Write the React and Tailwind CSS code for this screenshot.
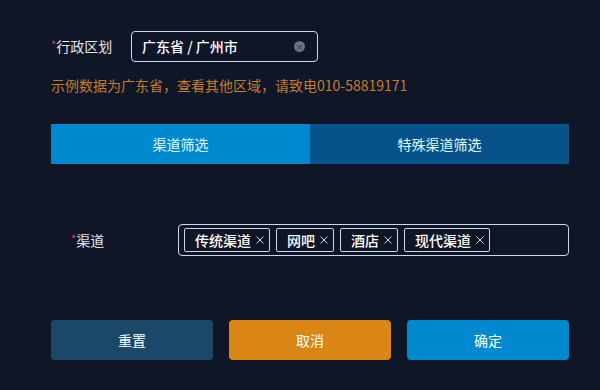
import React, { useState } from 'react'

const FONT = { fontFamily: '"Microsoft YaHei", "Noto Sans CJK SC", "Noto Sans", sans-serif' }

export default function App() {
  const [tab, setTab] = useState('channel')
  const [tags, setTags] = useState(['传统渠道', '网吧', '酒店', '现代渠道'])

  return (
    <div style={FONT} className="w-[600px] h-[390px] bg-[#0e1628] text-white pt-[31px] pl-[51px] pr-[31px] overflow-hidden">
      {/* 行政区划 */}
      <div className="flex items-center h-[31px]">
        <label className="w-[80px] text-[14px] text-[#e6e9ef]">
          <span className="text-[#d9467a] text-[11px] align-top">*</span>行政区划
        </label>
        <div className="w-[187px] h-[31px] border border-[#cfd6e4] rounded-[4px] flex items-center pl-[10px] pr-[12px]">
          <span className="flex-1 text-[14px] font-medium text-white">广东省 / 广州市</span>
          <span className="w-[11px] h-[11px] rounded-full bg-[#6b7180] flex items-center justify-center text-[8px] leading-none text-[#2b3040]">×</span>
        </div>
      </div>

      <div className="mt-[13px] text-[14px] text-[#c77c2c]">示例数据为广东省，查看其他区域，请致电010-58819171</div>

      {/* tabs */}
      <div className="mt-[28px] flex h-[40px]">
        <button
          onClick={() => setTab('channel')}
          className={`flex-1 text-[14px] text-[#e4fbff] ${tab === 'channel' ? 'bg-[#0189cf]' : 'bg-[#08528c]'}`}
        >
          渠道筛选
        </button>
        <button
          onClick={() => setTab('special')}
          className={`flex-1 text-[14px] text-[#e4fbff] ${tab === 'special' ? 'bg-[#0189cf]' : 'bg-[#08528c]'}`}
        >
          特殊渠道筛选
        </button>
      </div>

      {/* 渠道 */}
      <div className="mt-[60px] flex items-center h-[32px]">
        <label className="w-[127px] pl-[20px] text-[14px] text-[#e6e9ef]">
          <span className="text-[#d9467a] text-[11px] align-top">*</span>渠道
        </label>
        <div className="flex-1 h-[32px] border border-[#cfd6e4] rounded-[4px] flex items-center gap-[6px] px-[5px]">
          {tags.map(t => (
            <span key={t} className="h-[24px] border border-[#cfd6e4] rounded-[2px] flex items-center pl-[10px] pr-[5px] text-[14px] font-medium text-white">
              {t}
              <button onClick={() => setTags(tags.filter(x => x !== t))} className="ml-[5px] flex items-center">
                <svg width="8" height="8" viewBox="0 0 8 8" fill="none" stroke="#cfd6e4" strokeWidth="1">
                  <path d="M0.5 0.5L7.5 7.5M7.5 0.5L0.5 7.5" />
                </svg>
              </button>
            </span>
          ))}
        </div>
      </div>

      {/* buttons */}
      <div className="mt-[64px] grid grid-cols-3 gap-[16px]">
        <button className="h-[40px] rounded-[4px] bg-[#1b4868] text-[14px] text-white">重置</button>
        <button className="h-[40px] rounded-[4px] bg-[#da8616] text-[14px] text-white">取消</button>
        <button className="h-[40px] rounded-[4px] bg-[#0189cf] text-[14px] text-white">确定</button>
      </div>
    </div>
  )
}
